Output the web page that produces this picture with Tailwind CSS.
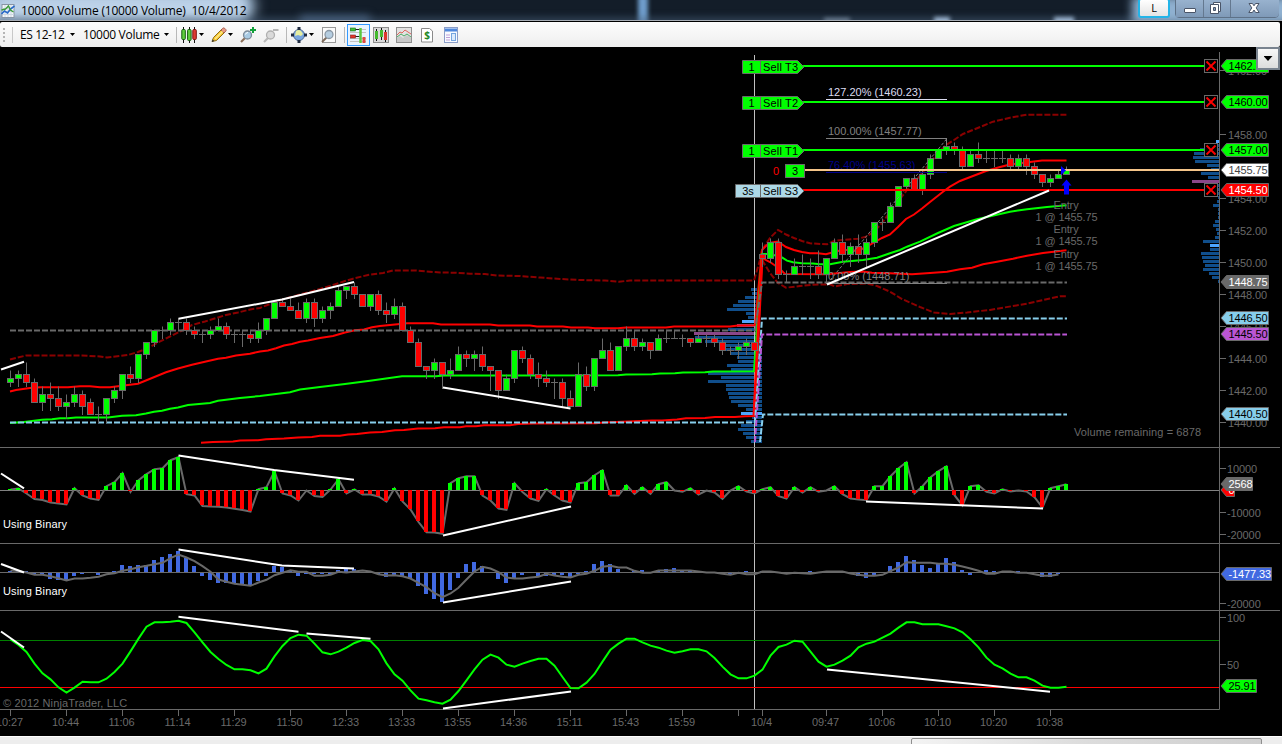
<!DOCTYPE html>
<html lang="en">
<head>
    <meta charset="UTF-8">
    <title>10000 Volume (10000 Volume) 10/4/2012</title>
    <script src="https://cdn.jsdelivr.net/npm/@tailwindcss/browser@4"></script>
</head>
<body class="w-[1282px] h-[744px] overflow-hidden bg-black flex flex-col font-['Open_Sans',sans-serif] text-[12px] text-black">
    <!-- Title Bar -->
    <header class="h-[22px] w-full shrink-0 relative overflow-hidden bg-[#131d29] border-b border-black">
        <div class="absolute -left-5 -top-3 w-[275px] h-9 rounded-full bg-[#a9c3de] blur-[7px]"></div>
        <div class="absolute left-0 -top-1 w-[245px] h-7 bg-[#c4d8ec]/70 blur-[6px]"></div>
        <div class="absolute left-[300px] top-[15px] w-[70px] h-3 bg-[#5d7da3]/60 blur-[4px]"></div>
        <div class="absolute left-[638px] -top-1 w-2.5 h-8 bg-[#6f9dcc] blur-[2px]"></div>
        <div class="absolute left-0 top-[17px] w-full h-2 bg-[#4a627c]/50 blur-[3px]"></div>
        <div class="absolute left-[824px] top-[18px] w-[26px] h-1 bg-[#a9bcd4]/60 blur-[2px]"></div>
        <div class="absolute left-[934px] top-[17px] w-4 h-2 bg-[#b9d4f4]/80 blur-[2px]"></div>
        <div class="absolute left-[1054px] top-[17px] w-5 h-2 bg-[#b9d4f4]/80 blur-[2px]"></div>
        <div class="absolute left-[1132px] -top-1 w-[170px] h-7 bg-[#8fb0d0] blur-[5px]"></div>
        <div class="absolute left-0 bottom-0 w-full h-px bg-[#a7adb5]"></div>
        <div class="relative flex items-start h-full">
            <svg class="mt-1 ml-[1px] w-[14px] h-[14px] shrink-0" viewBox="0 0 13 14">
                <rect x=".5" y=".5" width="12" height="13" fill="#f2f6fa" stroke="#8795a5"/>
                <path d="M3.5 1v12M6.5 1v12M9.5 1v12M1 4.5h11M1 7.5h11M1 10.5h11" stroke="#cdd8e2"/>
                <path d="M0 10l3-3 3 2 3-4 4-3" fill="none" stroke="#2769c9" stroke-width="1.6"/>
                <path d="M0 6l4-1 3-3 2 4 3 2" fill="none" stroke="#3a9b3a" stroke-width="1.4"/>
            </svg>
            <span class="ml-1.5 mt-[1px] leading-[19px] whitespace-pre text-[12px] tracking-[-0.21px]">10000 Volume (10000 Volume)  10/4/2012</span>
            <div class="absolute left-[1138px] -top-0.5 w-[32px] h-[20px] border-2 border-[#23b4e8] rounded-[3px] bg-gradient-to-b from-white to-[#e4e4e4] text-center leading-4 text-[11px]">L</div>
            <div class="absolute left-[1175px] -top-1 w-[104px] h-[22px] flex border border-[#5d7187] rounded-[4px] bg-[#8fa9c6]">
                <div class="w-7 border-r border-[#64788f] bg-gradient-to-b from-[#9db6d2] to-[#7f9ab8]"><svg class="w-7 h-5" viewBox="0 0 28 20"><rect x="8.500" y="11.500" width="11" height="4" rx=".5" fill="#fff" stroke="#4a5568"/></svg></div>
                <div class="w-[27px] border-r border-[#64788f] bg-gradient-to-b from-[#9db6d2] to-[#7f9ab8]"><svg class="w-[26px] h-5" viewBox="0 0 26 20"><path d="M9.500 5.500h7v9h-7z" fill="#fff" stroke="#4a5568"/><path d="M6.500 7.500h8v9h-8z" fill="#fff" stroke="#4a5568"/><path d="M9.500 10.500h2v3h-2z" fill="#7f9ab8" stroke="#4a5568"/></svg></div>
                <div class="flex-1 bg-gradient-to-b from-[#9db6d2] to-[#7f9ab8] rounded-r"><svg class="w-12 h-5" viewBox="0 0 48 20"><path d="M18 6.500h3.500l1.500 2.300 1.500-2.300H28l-2.800 4.400 3 4.600h-3.600L23 13l-1.600 2.500h-3.600l3-4.600z" fill="#fff" stroke="#4a5568"/></svg></div>
            </div>
        </div>
    </header>

    <!-- Toolbar -->
    <div class="h-[25px] w-[1280px] shrink-0 flex items-center rounded-[2px] bg-gradient-to-b from-[#fdfdfd] to-[#eeeeee] relative">
        <svg class="ml-[3px] w-[3px] h-4 shrink-0" viewBox="0 0 3 16"><path d="M1 1v15" stroke="#b5b5b5" stroke-width="2" stroke-dasharray="2 2"/></svg>
        <div class="ml-1.5 w-px h-4 bg-[#c8c8c8]"></div>
        <span class="ml-[7px] w-[50px] whitespace-nowrap tracking-[-0.4px]">ES 12-12</span>
        <div class="w-[5px] h-[3px] bg-black [clip-path:polygon(0_0,100%_0,50%_100%)]"></div>
        <span class="ml-2 w-[81px] whitespace-nowrap tracking-[-0.3px]">10000 Volume</span>
        <div class="w-[5px] h-[3px] bg-black [clip-path:polygon(0_0,100%_0,50%_100%)]"></div>
        <div class="ml-[7px] w-px h-4 bg-[#b8b8b8]"></div>
        <svg class="ml-1 w-4 h-4" viewBox="0 0 16 16">
            <path d="M2.500 0v16M8.500 0v16M13.500 0v16" stroke="#111"/>
            <rect x=".8" y="2.500" width="3.500" height="10" rx="1" fill="#5fd13c" stroke="#155c10"/>
            <rect x="6.600" y="2.500" width="3.500" height="11" rx="1" fill="#5fd13c" stroke="#155c10"/>
            <rect x="11.800" y="2.500" width="3.500" height="10" rx="1" fill="#e03a31" stroke="#7c1411"/>
        </svg>
        <div class="ml-0.5 w-[5px] h-[3px] bg-black [clip-path:polygon(0_0,100%_0,50%_100%)]"></div>
        <svg class="ml-[7px] w-4 h-4" viewBox="0 0 16 16">
            <path d="M1 14.500l1.500-4L11 2l3 3-8.500 8.500z" fill="#f6c62e" stroke="#8d6b18"/>
            <path d="M10 3l1.800-1.800q1-.8 2 .2l1 1q.8 1 0 1.800L13 6z" fill="#e89a83" stroke="#9b5348" stroke-width=".8"/>
            <path d="M4 12l7.500-7.500" stroke="#fdea8c" stroke-width="1.500"/>
            <path d="M.8 15l.9-2.500 1.700 1.600z" fill="#333"/>
        </svg>
        <div class="ml-[1px] w-[5px] h-[3px] bg-black [clip-path:polygon(0_0,100%_0,50%_100%)]"></div>
        <svg class="ml-[7px] w-4 h-4" viewBox="0 0 16 16">
            <path d="M1 15l4.500-4.500" stroke="#8b6f58" stroke-width="2.200"/>
            <circle cx="7.500" cy="8" r="4" fill="#a9cbe4" stroke="#7d8b98" stroke-width="1.300"/>
            <path d="M5.500 7.500q.5-2 2.500-2" fill="none" stroke="#fff"/>
            <path d="M13 0v6M10 3h6" stroke="#12a03a" stroke-width="2"/>
        </svg>
        <svg class="ml-[7px] w-4 h-4" viewBox="0 0 16 16">
            <path d="M1 15l4.500-4.500" stroke="#b9b9b9" stroke-width="2.200"/>
            <circle cx="7.500" cy="8" r="4" fill="#dadada" stroke="#b0b0b0" stroke-width="1.300"/>
            <path d="M10 3h5.500" stroke="#b5b5b5" stroke-width="2"/>
        </svg>
        <div class="ml-[7px] w-px h-4 bg-[#b8b8b8]"></div>
        <svg class="ml-1 w-4 h-4" viewBox="0 0 16 16">
            <circle cx="8" cy="8" r="5.500" fill="#7aa7e0" stroke="#4e6c98"/>
            <path d="M5 4q3-2 5 0l2 3-2 2-3-1-3 1z" fill="#e6eea0"/>
            <path d="M6.500 0h3v3h-3zM6.500 13h3v3h-3zM0 6.500h3v3H0zM13 6.500h3v3h-3z" fill="#1e2b40"/>
        </svg>
        <div class="ml-0.5 w-[5px] h-[3px] bg-black [clip-path:polygon(0_0,100%_0,50%_100%)]"></div>
        <svg class="ml-[7px] w-4 h-4" viewBox="0 0 16 16">
            <rect x="1.500" y=".5" width="13" height="15" fill="#fafafa" stroke="#999"/>
            <path d="M1 15l4.500-4.500" stroke="#7e6a5a" stroke-width="2"/>
            <circle cx="8" cy="7.500" r="4" fill="#b5cde0" stroke="#8a98a5" stroke-width="1.300"/>
        </svg>
        <div class="ml-[7px] w-px h-4 bg-[#b8b8b8]"></div>
        <div class="ml-0.5 w-[23px] h-[22px] border border-[#3399ff] bg-[#eaf4ff] flex items-center justify-center">
            <svg class="w-[17px] h-4" viewBox="0 0 17 16">
                <path d="M0 2.500h16M0 5.500h16M0 11.500h16M0 14.500h16" stroke="#c3c3c3"/>
                <path d="M4.500 2.500h5M4.500 9.500h5" stroke="#222"/>
                <rect x=".5" y="1" width="5" height="3" fill="#3fc03a" stroke="#196d18" stroke-width=".6"/>
                <rect x=".5" y="8" width="5" height="3" fill="#e3362d" stroke="#84211d" stroke-width=".6"/>
                <path d="M10.500 1v15" stroke="#5cc83e" stroke-width="2.500"/>
                <path d="M14 10v6" stroke="#e14a40" stroke-width="3"/>
            </svg>
        </div>
        <svg class="ml-[3px] w-4 h-4" viewBox="0 0 16 16">
            <rect x=".5" y=".5" width="15" height="15" fill="#d9d9d9" stroke="#8e8e8e"/>
            <path d="M3.500 2v12M8.500 1v12M12.500 3v12" stroke="#111"/>
            <path d="M3.500 4v8M8.500 3v7" stroke="#45b92e" stroke-width="3"/>
            <path d="M12.500 5v8" stroke="#dc372e" stroke-width="3"/>
        </svg>
        <svg class="ml-[7px] w-4 h-4" viewBox="0 0 16 16">
            <rect x=".5" y=".5" width="15" height="15" fill="#e2e2e2" stroke="#8e8e8e"/>
            <path d="M1 11l3-2 3 2 4-3 4 3v4H1z" fill="#c8c8c8"/>
            <path d="M1 8l3-3 2 1 3-3 3 2 3 2" fill="none" stroke="#df655d"/>
            <path d="M1 10l4-3 3 2 3-2 4 3" fill="none" stroke="#4cab66"/>
        </svg>
        <svg class="ml-[9px] w-3 h-4" viewBox="0 0 12 16">
            <path d="M.5 1.500h8l3 2.500v11H.5z" fill="#fff" stroke="#8a8a8a"/>
            <text x="6" y="12" text-anchor="middle" font-size="10" font-weight="bold" fill="#248824">$</text>
        </svg>
        <svg class="ml-[11px] w-[14px] h-4" viewBox="0 0 14 16">
            <rect x=".5" y=".5" width="13" height="15" fill="#f7faff" stroke="#8b9dc7"/>
            <path d="M1 3h12" stroke="#4f88dc" stroke-width="3"/>
            <path d="M2 8h4M2 10.500h4M2 13h4" stroke="#c0a0d8"/>
            <rect x="7.500" y="6.500" width="4" height="7" fill="#dceafb" stroke="#74a5df"/>
        </svg>
    </div>

    <!-- Chart -->
    <main class="relative w-full h-[689px] shrink-0 bg-black">
        <svg id="chart" class="block w-[1282px] h-[689px] font-['Liberation_Sans',sans-serif] text-[11px] tracking-[-0.1px]" viewBox="0 47 1282 689" fill="none"></svg>
        <button class="absolute left-[1256px] top-0 w-6 h-[23px] border-2 border-[#79838f] bg-gradient-to-b from-[#f8f8f8] to-[#dcdcdc] flex items-center justify-center">
            <span class="w-[9px] h-[5px] bg-black [clip-path:polygon(0_0,100%_0,50%_100%)]"></span>
        </button>
    </main>

    <!-- Scrollbar -->
    <div class="w-full h-2 shrink-0 bg-[#ededed] border-t border-white flex">
        <div class="ml-[911px] mt-px w-[351px] h-3 shrink-0 border border-[#8f8f8f] rounded-[2px] bg-gradient-to-r from-[#f3f3f3] via-[#dcdcdc] to-[#cfcfcf]"></div>
    </div>

    <script>
        const chart = document.getElementById('chart');
        let out = '';
        const GRAY = '#696969';
        const xAt = i => 10.5 + i * 8;

        function rect(x, y, w, h, fill, extra = '') {
            out += `<rect x="${x}" y="${y}" width="${w}" height="${h}" fill="${fill}" ${extra}/>`;
        }
        function line(points, stroke, width = 1, extra = '') {
            out += `<polyline points="${points}" stroke="${stroke}" stroke-width="${width}" ${extra}/>`;
        }
        function text(x, y, str, fill = GRAY, extra = '') {
            out += `<text x="${x}" y="${y}" fill="${fill}" ${extra}>${str}</text>`;
        }

        // volume profile, previous session: left edges, one row per tick
        const profile = [751, 752, 745, 738, 733, 727, 746, 748, 742, 737, 728, 694, 695, 705, 722, 726, 730, 737, 738, 727, 731, 708, 721, 708, 726, 726, 728, 729, 731, 738, 746, 741, 752, 746, 741, 738, 743, 746, 751];
        profile.forEach((x, j) => {
            const fill = j === 8 || j === 31 ? '#4da6ff' : j === 9 || j === 11 ? '#8b4789' : '#104e8b';
            rect(x, 288 + j * 4, (j < 12 ? 757 : 762) - x, 3, fill);
        });
        // volume profile, current session: bar widths
        const today = [3, 1, 19, 25, 26, 24, 12, 8, 18, 11, 27, 2, 1, 2, 1, 2, 6, 1, 1, 1, 4, 6, 3, 2, 4, 16, 9, 9, 18, 17, 16, 14, 16, 10, 7, 1];
        today.forEach((w, j) => {
            const fill = j === 0 || j === 26 ? '#4da6ff' : j === 10 ? '#8b4789' : '#104e8b';
            rect(1219 - w, 140 + j * 4, w, 3, fill);
        });

        // session break
        line('754.5,55 754.5,709', '#c0c0c0');

        // keltner bands
        const dash = 'stroke-dasharray="6 2"';
        line('10,359.5 26,355.500 82,355.500 100,356.500 107,357.500 128,355 138,352 148,348 158,342.500 170,336.500 182,330.500 192,325 205,321.500 218,317.500 226,315 238,312.500 250,309.500 260,308 270,304 284,299 320,289 333,285 345,281 353,278.700 368,275 383,273 393,270.500 416,270.500 440,272.500 455,272.700 470,273.700 485,274 497,275.500 520,276 540,277.500 560,279 580,280 605,280.500 619,281.700 630,280.500 754,280.500 760,260 762,250 770,238 778,230 786,234.500 794,238 802,241 810,243.300 827,244.300 834,241 842,240 858,238.700 866,236.700 874,231.700 882,223 890,212 898,201.700 907,190 918,178 930,163 938,153 946,145 954,140 963,134 977,128.300 993,121.700 1010,117.700 1027,114.700 1066.500,114.700', '#8b0000', 2, dash);
        line('762,260 770,273 778,283 786,287.700 800,286 813,284.700 830,284.300 835,286.500 847,284 867,283.500 877,286 890,291.700 902,299 920,307 934,312.500 950,314 967,312.500 980,311 990,310 1003,307.700 1027,303.700 1043,300 1060,296.300 1066.500,296.300', '#8b0000', 2, dash);
        line('10,391.500 16,390 30,388 40,387.300 68,387.300 80,386.300 90,386.300 100,387.300 110,387.300 120,386 138,383.700 152,378 166,372.300 178,368.500 192,364.700 206,361.500 218,358.700 226,357.700 236,355.500 250,353.700 260,351.500 268,350.500 276,348.300 284,345.500 292,344 300,341.700 308,340.500 320,338 333,336 345,332.500 355,330.300 364,329.500 372,327.300 380,326 395,324.500 407,323.300 433,323.300 441,324.500 490,324.500 498,325.500 530,325.500 537,326.500 563,326.500 571,327.500 588,327.500 595,328.300 618,328.300 626,327.400 666,327.400 674,326.400 730,326.400 738,325.500 755,325.300 762,250 769,243 778,241.500 786,247 794,250 802,252 810,253.300 818,253.300 826,254.300 834,252 842,250 850,250 858,251 866,247 874,242.500 882,238 890,234.500 898,227 906,219 914,214.500 922,208.500 930,202 943,191.700 950,186.700 960,181 973,176 986,171 1000,167 1010,164.500 1020,163.300 1030,162 1042,160.500 1066.500,160.500', '#f00', 2);
        line('201,442.700 213,442 233,441.500 240,440.500 258,440.300 266,439.200 284,438.500 298,437.500 312,437 320,435.700 340,435.700 348,434.500 357,434 370,432.500 382,432 395,430.300 404,430 418,428.500 435,428.300 444,427.300 460,427.300 466,426.300 476,426.300 484,425.300 510,425.300 518,424 533,423.500 596,423.300 604,422.500 640,421 652,420.500 662,420.500 677,419.500 686,418.300 705,418 715,417 735,417 745,416.300 754,416 762,258 770,262 780,269 785,274 827,274.300 850,272 863,271.500 872,272.700 890,273.300 912,274.300 930,273 947,271.700 960,269.300 972,267.700 983,264.300 997,261.700 1013,258.700 1027,255.700 1043,253 1066.500,250.300', '#f00', 2);
        line('10,423 24,422 32,421 42,419.700 52,419.300 60,418.300 68,418.300 76,417.500 108,417.500 122,415.700 136,415.300 146,413.500 154,411.700 162,410.700 170,408.700 178,407.500 188,405 210,403 218,400.700 240,398 260,396 290,392.300 300,389.500 320,387 345,384 370,380.700 402,376.300 436,376.300 444,375.500 618,375.300 626,374.500 652,374.200 660,373.500 675,373.200 683,372.500 705,372.200 713,371.400 754,371.300 762,254 770,254 782,257.300 787,260.700 793,262.300 802,263.300 813,263.500 820,264.300 830,264.300 843,261.700 863,260 877,257.700 890,253.300 900,250 907,246.700 920,241.700 938,233 954,226 977,219.300 1010,211.700 1027,209.300 1047,207 1066.500,205.300', '#0f0', 2);
        line('754,416 762,258', '#f00', 3);

        // pivot levels
        line('10,330.500 755,330.500 762,282.500 1067,282.500', GRAY, 2, dash);
        line('10,422.500 755,422.500 762,318.500 1067,318.500', '#87ceeb', 2, dash);
        line('755,442 762,334.500 1067,334.500', '#ba55d3', 2, dash);
        line('760,442 763,414.500 1067,414.500', '#87ceeb', 2, dash);

        // candles: colour, then high / body top / body bottom / low in ticks below 1449.50
        const candles = `g25,27,28,29 g25,26,27,29 r23,26,28,29 r27,28,33,33 g29,31,33,35 r28,31,32,35 r29,32,34,35 g31,33,34,37 g29,31,33,34 r30,31,34,36
            r32,33,36,36 d34,36,36,38 g32,32,36,38 g29,30,32,33 g26,26,30,32 r24,26,27,28 g21,21,27,28 g18,18,21,22 g15,15,18,19 d14,15,15,17
            g12,13,15,16 d12,13,13,15 r12,13,15,16 r14,15,16,17 d15,16,16,18 g14,15,16,17 g12,14,15,15 r13,14,16,17 d15,16,16,18 d15,16,16,19
            r15,16,17,18 g13,15,17,18 g12,12,15,16 g8,8,12,12 r7,8,9,9 r7,9,10,10 r8,10,12,12 g7,8,12,13 r7,8,12,14 g9,10,12,13
            g8,9,10,12 g4,5,9,9 g4,4,5,7 r3,4,6,7 r6,6,9,9 g6,6,9,10 r5,6,10,11 r8,10,11,13 g7,9,11,12 r8,9,15,15
            r14,15,18,18 r17,18,24,24 r24,24,25,27 g22,23,25,27 r23,23,26,29.5 g22,25,26,27 g19,21,25,25 r20,21,22,24 g20,21,22,25 r19,21,24,25
            r24,24,25,30 r25,25,30,32 g26,27,30,30 g20,20,27,28 r19,20,22,23 r21,22,26,27 r23,26,27,29 r25,27,28,29 d27,28,28,32 r27,28,32,34
            r30,32,34,34 g23,26,34,34 r24,26,29,30 g22,22,29,30 g17,20,22,22 r18,20,25,25 g19,19,25,25 g14,17,19,20 r15,17,19,20 g17,18,19,20
            r18,18,20,22 g16,17,20,20 d15,17,17,18 d15,17,17,17 d16,17,17,19 r17,17,18,19 g16,17,18,18 d16,17,17,19 r16,17,18,19 r17,18,20,21
            d19,20,20,21 g18,19,20,22 g17,18,19,21 r18,18,20,20 r-7,-4,-3,-1 g-8,-7,-3,-2 r-8,-7,1,2 d0,1,1,3 g-3,-1,1,1 d-4,-1,-1,1
            d-3,-1,-1,2 r-5,-1,1,2 g-3,-3,1,3 g-8,-7,-3,-3 r-9,-7,-4,-2 g-7,-6,-4,-1 r-9,-6,-4,-2 g-8,-7,-4,-1 g-12,-12,-7,-6 d-13,-12,-12,-10
            g-17,-16,-12,-12 g-21,-21,-16,-16 g-23,-23,-21,-20 r-24,-23,-20,-20 g-25,-24,-20,-19 g-29,-28,-24,-23 g-30,-30,-28,-28 g-32,-31,-30,-29 r-32,-31,-30,-29 r-31,-30,-26,-25
            g-30,-29,-26,-26 r-32,-29,-28,-27 d-30,-28,-28,-27 d-30,-28,-28,-26 d-30,-28,-28,-27 r-29,-28,-26,-25 g-29,-28,-26,-25 r-29,-28,-26,-24 r-27,-26,-24,-23 r-24,-24,-22,-21
            g-24,-23,-22,-21 g-25,-24,-23,-23 g-26,-25,-24,-24`;
        candles.trim().split(/\s+/).forEach((c, i) => {
            const [hi, top, bot, lo] = c.slice(1).split(',').map(k => 270.5 + k * 4);
            const x = xAt(i);
            line(`${x},${hi} ${x},${lo + .5}`, GRAY);
            if (c[0] === 'd') line(`${x - 3.5},${top} ${x + 3.5},${top}`, GRAY);
            else rect(x - 3, top, 6, bot - top, c[0] === 'g' ? '#0f0' : '#f00', `stroke="${GRAY}"`);
        });

        // fibonacci retracement
        line('827,284 947,138.500', '#808080', 1, 'stroke-dasharray="3 2"');
        line('946.500,138 946.500,145', '#808080');
        [[99.5, '127.20% (1460.23)', '#dcdcf0'], [138.5, '100.00% (1457.77)', '#808080'], [172.5, '76.40% (1455.63)', '#00008b'], [283.5, '0.00% (1448.71)', '#808080']].forEach(([y, label, c]) => {
            line(`826,${y} 947,${y}`, c);
            text(828, y - 3.5, label, c, 'class="tracking-[0px]"');
        });

        // orders
        function order(y, color, qty, label, left, fill) {
            line(`803,${y} 1204,${y}`, color, 2);
            out += `<path d="M${left} ${y - 5.5}H797.5L804 ${y + 1}L797.500 ${y + 7.5}H${left}ZM760.500 ${y - 5.5}v13" fill="${fill}" stroke="${GRAY}"/>`;
            text((left + 760.5) / 2, y + 5, qty, '#000', 'text-anchor="middle"');
            text(763, y + 5, label, '#000', 'textLength="35"');
            rect(1204.5, y - 6.5, 13, 13, '#000', `stroke="${GRAY}"`);
            out += `<path d="M1206.500 ${y - 4.5}l9 9m0 -9l-9 9" stroke="#f00" stroke-width="1.800"/>`;
        }
        order(66, '#0f0', '1', 'Sell T3', 742.5, '#0f0');
        order(102, '#0f0', '1', 'Sell T2', 742.5, '#0f0');
        order(150, '#0f0', '1', 'Sell T1', 742.5, '#0f0');
        order(190, '#f00', '3s', 'Sell S3', 735.5, '#add8e6');
        line('805,170 1219,170', '#f5c589', 2);
        rect(785.5, 164.5, 19, 13, '#0f0', `stroke="${GRAY}"`);
        text(795, 175, '3', '#000', 'text-anchor="middle"');
        text(773, 175, '0', '#f00');

        // executions
        out += '<path d="M1061 166v9l5-4.500zM1066.500 179.500l5 6h-2.500v9h-5v-9h-2.500z" fill="#00f"/>';
        [209, 233, 258].forEach(y => {
            text(1066, y, 'Entry', GRAY, 'text-anchor="middle"');
            text(1066.500, y + 12, '1 @ 1455.75', GRAY, 'text-anchor="middle"');
        });
        text(1074, 436, 'Volume remaining = 6878', GRAY, 'textLength="127"');

        // panel borders
        [447.5, 543.5, 610.5].forEach(y => line(`0,${y} 1280,${y}`, GRAY));
        line('0,709.500 1219.500,709.500 1219.500,52', GRAY);

        // delta histogram
        const delta = [1, 2, -3, -8.5, -9.5, -12, -13, -14, 2.3, -5, -8, -9.5, 4.3, 8.3, 17.3, -1.5, 10.3, 16.3, 21.3, 22.3, 30.3, 33.3, -3.7, -5, -15.5, -16, -16.3, -17, -18.3, -19.5, -21, 1.3, 3.3, 19.3, -3, -5, -10, 0, -5.5, -6.5, 1, 11.3, -3, 1, -4, -4, -6, -11, 2,
            -11, -19, -31.5, -41.7, -42, -43.3, 7.3, 12.3, 14.3, 14.3, -5, -10, -18, -19.3, 7.3, -1.5, -8, -10.3, 1.3, -5, -10, -12, 7.3, 8.3, 15.3, 20.3, -5, -5, 5.3, -3.3, 3.3, -3.3, 6.3, 8.3, 0, -1.3, 2.3, -4, 0, -2, -8.3, 0, 4.3, -1, -3, 1.3, 3.3,
            -5.7, -8, 3.3, -2, 3.3, -1.3, 0, 4.3, -3.7, -8, -9, -9.7, 4.3, 4.3, 14.3, 22.3, 28.3, -3, 4.3, 13.3, 19.3, 24.3, -4.7, -15, 4.3, 5.3, -1.3, -3, 1.3, -1, 0, -1, -6.7, -17, 2.3, 4.3, 6.3];
        line('0,490.500 1219,490.500', '#808080');
        line(delta.map((v, i) => `${xAt(i)},${490.5 - v}`).join(' '), GRAY, 2);
        delta.forEach((v, i) => rect(xAt(i) - 2.5, v > 0 ? 490 - Math.round(v) : 490, 4, Math.abs(Math.round(v)), v > 0 ? '#0f0' : '#f00'));

        // blue oscillator and its average
        const osc = [1, .5, .5, -2, -3.5, -6.7, -7.7, -7.7, -4.5, -2.5, -1.5, -3.5, -1.5, 1.3, 7.3, 6.3, 7.3, 6.5, 12.3, 15.3, 18.3, 21.3, 14.3, 6.3, -4.5, -7.7, -10.7, -10.7, -11.5, -12.3, -12.7, -8.7, -3.7, 6.3, 5.3, 2, -3.7, -2.5, -2.5, -1.7, -1.7, 2.3, 3.3, 3.3, -.7, -.7, -2.5, -4.7, -2.7,
            -4, -6, -13.7, -21.7, -26.7, -29.7, -17.7, -5.7, 8.3, 10.3, 6.3, -.5, -6.7, -10.7, -5.7, -2.7, 0, -3.7, -3.7, -2.7, -2.7, -4.7, -2, 1.3, 8.3, 11.3, 8.3, 3.3, -.7, .5, 2.3, 0, 2, 3.3, 4.3, 2, 1, .5, -.5, -.7, -1.3, -1.7, 0, 1.3, -1.5, 1, 0,
            0, -1, -.7, -.7, 1.3, 0, 0, .7, .5, -1, -3.7, -5.7, -3, 0, 6.3, 10.3, 16.3, 12.3, 7.3, 4.3, 8.3, 14.3, 10.3, 2.3, -2.7, -.7, 2.3, 1.3, 0, 0, 1, 0, -1, -4.7, -4.7, -1.7];
        const avg = [2, 1.5, 0, -2.3, -2.3, -3.7, -5.7, -8, -6, -6, -5.3, -4.3, -1.7, -.7, 1.7, 3.3, 5.3, 6.7, 8.3, 9.7, 14.3, 18, 15, 11.3, 6.3, .7, -7, -9.3, -11.3, -12.3, -13.3, -10, -7.3, -2.7, -.3, 2.3, .7, .7, -3.3, -3.3, -2.3, .7, 0, 1, 2, 1, -1.7, -3, -2.7,
            -3.7, -6, -10.3, -14.7, -20.7, -24.7, -21, -15.3, -7, 1, 5.7, 4, .3, -5, -6, -6, -5, -4.3, -1.3, -3, -4.3, -5, -2.3, -1.3, 1.7, 5.7, 6.7, 5, 5, 1.7, -.3, -.3, 2, 2, 2, 2, 2, 1, 0, 0, -1.3, -2.3, -.3, -1.7, -1.7, 1, 1,
            0, -1.3, -.3, -.7, -1.3, 0, 1, 1, 1, -1, -2.3, -3.3, -3.3, -2.3, 1.3, 5, 10.3, 9.7, 9.7, 9.7, 8.7, 8.7, 7.7, 6, 4, 1.7, -1.3, -1.3, 1, 1, -.3, -.3, -1.7, -3.3, -3.3, -2];
        osc.forEach((v, i) => rect(xAt(i) - 2.5, v > 0 ? 572 - Math.round(v) : 572, 4, Math.abs(Math.round(v)), '#4169e1'));
        line('0,572.500 1219,572.500', GRAY);
        line(avg.map((v, i) => `${xAt(i)},${572.5 - v}`).join(' '), GRAY, 2);

        // stochastic, in thirds of a pixel below y=440
        const stoch = [598, 615, 636, 671, 700, 718, 742, 758, 743, 725, 727, 727, 716, 696, 671, 634, 596, 560, 547, 547, 545, 542, 549, 577, 607, 636, 657, 675, 688, 688, 691, 700, 686, 649, 618, 594, 584, 587, 611, 637, 643, 635, 623, 609, 600, 603, 628, 670, 703,
            722, 751, 776, 781, 787, 791, 779, 753, 721, 688, 659, 644, 653, 674, 680, 671, 663, 656, 656, 677, 711, 744, 745, 728, 702, 665, 629, 611, 596, 596, 607, 617, 623, 632, 638, 634, 628, 628, 634, 654, 680, 703, 715, 715, 707, 689, 647,
            621, 614, 602, 605, 635, 665, 680, 674, 662, 647, 622, 611, 605, 593, 581, 563, 547, 547, 553, 553, 553, 559, 565, 577, 598, 622, 653, 674, 685, 701, 712, 712, 722, 737, 743, 743, 740];
        line('0,640.500 1219,640.500', '#008000');
        line('0,687.500 1219,687.500', '#f00');
        line(stoch.map((v, i) => `${xAt(i)},${440 + v / 3}`).join(' '), '#0f0', 2);

        // divergence lines
        ['1,369.500 24,361.700', '178.500,318.700 282,299.500 354,282', '443,387.500 570.500,408.500', '827,284.500 1049,190.500',
            '1,473.500 24,488.300', '178.500,455.500 274,470 354,479.700', '443,535.500 571,506.500', '866,501.500 1043,508.500',
            '1,564 24,572.500', '178.500,549.500 282,565.500 354,568.500', '443,602.500 571,581.500',
            '1,631.500 24,647.500', '178.500,616.700 298.500,631.700', '306.500,633.500 370.500,638.700', '443,708.500 571,691.500', '827,669.500 1050,691.700'
        ].forEach(p => line(p, '#fff', 2));

        // labels
        text(3, 528, 'Using Binary', '#fff', 'textLength="64"');
        text(3, 595, 'Using Binary', '#fff', 'textLength="64"');
        text(3, 707, '© 2012 NinjaTrader, LLC', GRAY, 'textLength="124"');

        // time axis
        ['10:27', '10:44', '11:06', '11:14', '11:29', '11:50', '12:33', '13:33', '13:55', '14:36', '15:11', '15:43', '15:59'].forEach((t, n) => {
            line(`${10.5 + n * 56},710 ${10.5 + n * 56},716`, GRAY);
            text(9.5 + n * 56, 726, t, GRAY, 'text-anchor="middle"');
        });
        line('738.500,710 738.500,716', GRAY);
        [[762.5, '10/4'], [826.5, '09:47'], [882.5, '10:06'], [938.5, '10:10'], [994.5, '10:20'], [1050.5, '10:38']].forEach(([x, t]) => {
            line(`${x},710 ${x},716`, GRAY);
            text(x - 1, 726, t, GRAY, 'text-anchor="middle"');
        });

        // value axis
        for (let p = 1440; p <= 1462; p += 2) {
            if (p === 1456 || p === 1460) continue;
            const y = 134.5 + (1458 - p) * 16;
            line(`1220,${y} 1226,${y}`, GRAY);
            text(1228, y + 4, p + '.00');
        }
        [[468.5, '10000'], [512.5, '-10000'], [534.5, '-20000'], [603.5, '-20000'], [617.5, '100'], [664.5, '50']].forEach(([y, t]) => {
            line(`1220,${y} 1226,${y}`, GRAY);
            text(1227, y + 4, t);
        });
        function tag(y, label, fill, color, right = 1268.5) {
            out += `<path d="M1221 ${y}L1226.500 ${y - 6.5}H${right}V${y + 6.5}H1226.500Z" fill="${fill}" stroke="${GRAY}"/>`;
            text(1228.5, y + 4, label, color);
        }
        tag(66, '1462.25', '#0f0', '#000');
        tag(102, '1460.00', '#0f0', '#000');
        tag(150, '1457.00', '#0f0', '#000');
        tag(170, '1455.75', '#fff', '#444');
        tag(190, '1454.50', '#f00', '#fff');
        tag(282, '1448.75', GRAY, '#fff');
        tag(318, '1446.50', '#87ceeb', '#000');
        tag(334, '1445.50', '#ba55d3', '#000');
        tag(414, '1440.50', '#87ceeb', '#000');
        tag(490, '0', '#f00', '#fff', 1234.5);
        tag(484, '2568', GRAY, '#fff', 1252.5);
        tag(574, '-1477.33', '#4169e1', '#fff', 1271.5);
        tag(686, '25.91', '#0f0', '#000', 1256.5);

        chart.innerHTML = out;
    </script>
</body>
</html>
